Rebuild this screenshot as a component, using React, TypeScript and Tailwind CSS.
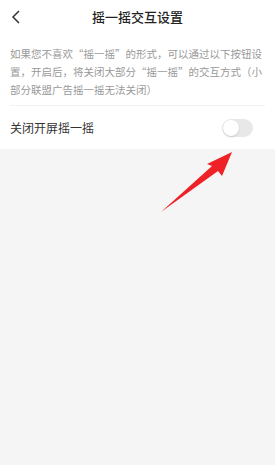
const FONT = { fontFamily: '"Noto Sans CJK SC", "Noto Sans", sans-serif' };

function ArrowOverlay() {
  return (
    <svg className="absolute left-0 top-0 pointer-events-none" width="275" height="465" viewBox="0 0 275 465">
      <path d="M161 212 L212 166 L207 164 L232 152 L222 176 L218 171 Z" fill="#ee2226" />
    </svg>
  );
}

export default function App() {
  return (
    <div className="relative w-[275px] h-[465px] bg-[#f5f5f5] overflow-hidden" style={FONT}>
      <div className="bg-white">
        <div className="relative h-[34px] flex items-center justify-center">
          <svg className="absolute left-[11px] top-[10px]" width="10" height="14" viewBox="0 0 10 14">
            <path d="M8 1 L2 7 L8 13" fill="none" stroke="#333" strokeWidth="1.5" />
          </svg>
          <span className="text-[13px] font-medium text-[#222]">摇一摇交互设置</span>
        </div>
        <div className="mx-[10px] pt-[11px] pb-[6px] text-[10.5px] leading-[18px] text-[#999] border-b border-[#f2f2f2]">
          如果您不喜欢“摇一摇”的形式，可以通过以下按钮设置，开启后，将关闭大部分“摇一摇”的交互方式（小部分联盟广告摇一摇无法关闭）
        </div>
        <div className="h-[43px] flex items-center justify-between pl-[10px] pr-[22px]">
          <span className="text-[12px] text-[#333]">关闭开屏摇一摇</span>
          <div className="w-[31px] h-[18px] rounded-full bg-[#e8e8e8] relative">
            <div className="absolute left-[1px] top-[1px] w-[16px] h-[16px] rounded-full bg-white shadow-[0_1px_2px_rgba(0,0,0,0.15)]" />
          </div>
        </div>
      </div>
      <ArrowOverlay />
    </div>
  );
}
